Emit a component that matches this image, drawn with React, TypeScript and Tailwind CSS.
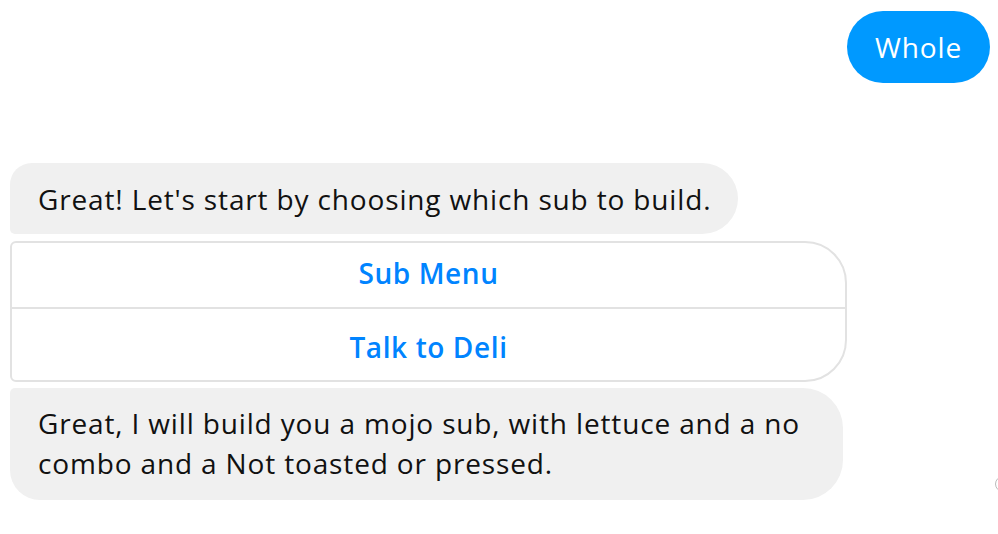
import React from 'react';

const font = { fontFamily: '"Open Sans", "Noto Sans", sans-serif' };

export default function App() {
  return (
    <div className="w-[998px] h-[534px] bg-white overflow-hidden relative" style={font}>
      <div className="flex flex-col pt-[11px] pl-[10px] pr-[8px]">
        {/* outgoing */}
        <div className="flex justify-end">
          <div className="h-[72px] px-[28px] rounded-full bg-[#0099ff] text-white text-[28px] tracking-[0.85px] flex items-center">
            Whole
          </div>
        </div>

        {/* incoming */}
        <div className="mt-[80px] flex flex-col items-start gap-[7px]">
          <div className="h-[71px] pl-[28px] pr-[27px] pt-[1px] flex items-center bg-[#f0f0f0] text-[#111] text-[28px] tracking-[0.85px] rounded-tl-[22px] rounded-bl-[5px] rounded-r-[36px]">
            Great! Let's start by choosing which sub to build.
          </div>

          <div className="w-[837px] border-2 border-[#e2e2e2] rounded-tl-[6px] rounded-bl-[6px] rounded-r-[42px] flex flex-col">
            <button className="h-[64px] pb-[5px] flex items-center justify-center text-[#0084ff] text-[28px] font-semibold tracking-[0.6px]">
              Sub Menu
            </button>
            <div className="h-[2px] bg-[#e2e2e2]" />
            <button className="h-[71px] pt-[4px] flex items-center justify-center text-[#0084ff] text-[28px] font-semibold tracking-[0.6px]">
              Talk to Deli
            </button>
          </div>

          <div className="-mt-[1px] w-[833px] pl-[28px] pr-[30px] pt-[15px] pb-[17px] bg-[#f0f0f0] text-[#111] text-[28px] leading-[40px] tracking-[0.85px] rounded-tl-[5px] rounded-bl-[30px] rounded-r-[40px]">
            Great, I will build you a mojo sub, with lettuce and a no combo and a Not toasted or pressed.
          </div>
        </div>
      </div>
      <div className="absolute left-[995px] top-[476px] w-[16px] h-[16px] rounded-full border border-[#bbb]" />
    </div>
  );
}
